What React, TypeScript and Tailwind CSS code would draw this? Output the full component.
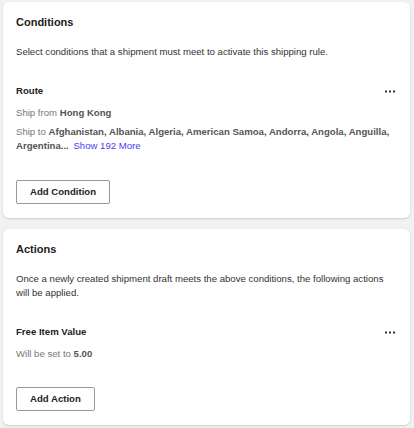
const font = { fontFamily: "'Liberation Sans', Arial, sans-serif" };

function Dots() {
  return (
    <button className="mr-[2px] leading-none">
      <svg width="10" height="3" viewBox="0 0 10 3" fill="#333">
        <rect x="0" y="0.5" width="2" height="2" />
        <rect x="4" y="0.5" width="2" height="2" />
        <rect x="8" y="0.5" width="2" height="2" />
      </svg>
    </button>
  );
}

export default function App() {
  return (
    <div className="min-h-screen bg-[#f1f1f1] px-[3px] py-[2px] text-[#333]" style={font}>
      <div className="flex flex-col gap-[11px] w-[407px]">
        <div className="bg-white rounded-[6px] shadow-[0_1px_2px_rgba(0,0,0,0.15)] px-[13px] pt-[13px] pb-[14px]">
          <h2 className="text-[11px] font-bold text-[#222] leading-[14px]">Conditions</h2>
          <p className="mt-[16px] text-[9.6px] leading-[14px]">
            Select conditions that a shipment must meet to activate this shipping rule.
          </p>

          <div className="mt-[25px]">
            <div className="flex items-center justify-between">
              <h3 className="text-[9.6px] font-bold text-[#222] leading-[14px]">Route</h3>
              <Dots />
            </div>
            <p className="mt-[8px] text-[9.6px] leading-[14px] text-[#777]">
              Ship from <span className="font-bold text-[#555]">Hong Kong</span>
            </p>
            <p className="mt-[5px] text-[9.6px] leading-[14px] text-[#777]">
              Ship to{" "}
              <span className="font-bold text-[#555]">
                Afghanistan, Albania, Algeria, American Samoa, Andorra, Angola, Anguilla, Argentina...
              </span>{" "}
              <a className="text-[#4b3ef0] ml-[2px]">Show 192 More</a>
            </p>
          </div>

          <button className="mt-[27px] border border-[#9a9a9a] rounded-[2px] px-[13px] h-[24px] text-[9.6px] font-bold text-[#222]">
            Add Condition
          </button>
        </div>

        <div className="bg-white rounded-[6px] shadow-[0_1px_2px_rgba(0,0,0,0.15)] px-[13px] pt-[13px] pb-[14px]">
          <h2 className="text-[11px] font-bold text-[#222] leading-[14px]">Actions</h2>
          <p className="mt-[16px] text-[9.6px] leading-[14px]">
            Once a newly created shipment draft meets the above conditions, the following actions will be applied.
          </p>

          <div className="mt-[25px]">
            <div className="flex items-center justify-between">
              <h3 className="text-[9.6px] font-bold text-[#222] leading-[14px]">Free Item Value</h3>
              <Dots />
            </div>
            <p className="mt-[8px] text-[9.6px] leading-[14px] text-[#777]">
              Will be set to <span className="font-bold text-[#555]">5.00</span>
            </p>
          </div>

          <button className="mt-[26px] border border-[#9a9a9a] rounded-[2px] px-[13px] h-[24px] text-[9.6px] font-bold text-[#222]">
            Add Action
          </button>
        </div>
      </div>
    </div>
  );
}
